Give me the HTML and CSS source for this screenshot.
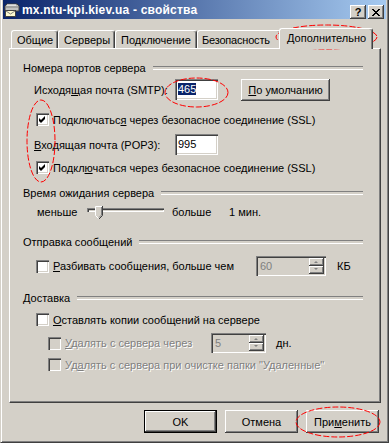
FILE: index.html
```html
<!DOCTYPE html>
<html lang="ru">
<head>
    <meta charset="UTF-8">
    <meta name="viewport" content="width=device-width, initial-scale=1.0">
    <title>mx.ntu-kpi.kiev.ua - свойства</title>
    <link rel="stylesheet" href="styles.css">
</head>
<body>
<div class="window">
    <div class="titlebar">
        <svg class="app-icon" width="16" height="16" viewBox="0 0 16 16">
            <path d="M3 2 H13 L15 4 V9 H1 V4 Z" fill="#c0c0c0" stroke="#404040"/>
            <path d="M3 3 H12" stroke="#fff"/>
            <path d="M2 5 H14" stroke="#808080"/>
            <rect x="1.5" y="8.5" width="10" height="6" fill="#fffbd0" stroke="#404040"/>
            <path d="M2 9 L6.5 12 L11 9" fill="none" stroke="#808080"/>
        </svg>
        <span class="title">mx.ntu-kpi.kiev.ua - свойства</span>
        <span class="caption-btns">
            <span class="cap-btn help">?</span>
            <span class="cap-btn">
                <svg width="8" height="7" viewBox="0 0 8 7"><path d="M0 0 L7 7 M1 0 L8 7 M7 0 L0 7 M8 0 L1 7" stroke="#000" stroke-width="1"/></svg>
            </span>
        </span>
    </div>

    <div class="tabs">
        <div class="tab tab-general">Общие</div>
        <div class="tab tab-servers">Серверы</div>
        <div class="tab tab-connect">Подключение</div>
        <div class="tab tab-security">Безопасность</div>
        <div class="tab tab-advanced active">Дополнительно</div>
    </div>

    <div class="panel">
        <div class="group-title">Номера портов сервера</div>
        <div class="port-row mt5">
            <span class="port-label">Исходя<u>щ</u>ая почта (SMTP):</span>
            <span class="edit"><span class="sel">465</span></span>
            <button class="btn btn-port"><u>П</u>о умолчанию</button>
        </div>
        <div class="check-row mt13">
            <span class="check"><svg width="7" height="7" viewBox="0 0 7 7"><path d="M0 2 L2 4 L6 0 V3 L2 7 L0 5 Z"/></svg></span>
            <span>Подключатьс<u>я</u> через безопасное соединение (SSL)</span>
        </div>
        <div class="port-row mt8">
            <span class="port-label"><u>В</u>ходящая почта (POP3):</span>
            <span class="edit">995</span>
        </div>
        <div class="check-row mt6">
            <span class="check"><svg width="7" height="7" viewBox="0 0 7 7"><path d="M0 2 L2 4 L6 0 V3 L2 7 L0 5 Z"/></svg></span>
            <span>Подкл<u>ю</u>чаться через безопасное соединение (SSL)</span>
        </div>

        <div class="group-title mt13">Время ожидания сервера</div>
        <div class="slider-row mt3">
            <span class="slider-less">меньше</span>
            <span class="track">
                <svg class="thumb" width="8" height="13" viewBox="0 0 8 13">
                    <path d="M0 0 H8 V9 L4 13 L0 9 Z" fill="#d4d0c8"/>
                    <path d="M0.5 9.5 V0.5 H7" fill="none" stroke="#fff"/>
                    <path d="M7.5 0 V9.5 L4 13" fill="none" stroke="#404040"/>
                    <path d="M6.5 1 V9 L4 11.5" fill="none" stroke="#808080"/>
                    <path d="M0.5 9.5 L3.5 12.5" fill="none" stroke="#fff"/>
                </svg>
            </span>
            <span class="slider-more">больше</span>
            <span>1 мин.</span>
        </div>

        <div class="group-title mt14">Отправка сообщений</div>
        <div class="check-row tall mt8">
            <span class="check"></span>
            <span class="split-label"><u>Р</u>азбивать сообщения, больше чем</span>
            <span class="spin spin-kb">
                <span class="spin-val">60</span>
                <span class="spin-btns"><span class="spin-btn up"></span><span class="spin-btn down"></span></span>
            </span>
            <span class="unit">КБ</span>
        </div>

        <div class="group-title mt16">Доставка</div>
        <div class="check-row mt9">
            <span class="check"></span>
            <span><u>О</u>ставлять копии сообщений на сервере</span>
        </div>
        <div class="check-row tall sub disabled mt7">
            <span class="check"></span>
            <span class="days-label"><u>У</u>далять с сервера через</span>
            <span class="spin spin-days">
                <span class="spin-val">5</span>
                <span class="spin-btns"><span class="spin-btn up"></span><span class="spin-btn down"></span></span>
            </span>
            <span class="unit">дн.</span>
        </div>
        <div class="check-row sub disabled mt5">
            <span class="check"></span>
            <span>Уд<u>а</u>лять с сервера при очистке папки "Удаленные"</span>
        </div>
    </div>

    <div class="actions">
        <button class="btn default">OK</button>
        <button class="btn">Отмена</button>
        <button class="btn">При<u>м</u>енить</button>
    </div>

    <!-- пометки красным поверх скриншота -->
    <svg class="marks" width="389" height="443" viewBox="0 0 389 443">
        <g fill="none" stroke="#f00" stroke-dasharray="6 2">
            <ellipse cx="326.5" cy="37" rx="50.5" ry="12"/>
            <ellipse cx="196.5" cy="92.5" rx="31.5" ry="14.5"/>
            <ellipse cx="41" cy="141" rx="14" ry="41"/>
            <ellipse cx="338" cy="422" rx="42" ry="15"/>
        </g>
    </svg>
</div>
</body>
</html>
```

FILE: styles.css
```css
* {
    box-sizing: border-box;
}
body {
    margin: 0;
    background: #d4d0c8;
    font: 11px "Liberation Sans", Arial, sans-serif;
    color: #000;
}
u {
    text-decoration: underline;
    text-underline-offset: 1px;
}
.window {
    position: relative;
    width: 389px;
    height: 443px;
    background: #d4d0c8;
    border-left: 1px solid #d4d0c8;
    border-right: 1px solid #404040;
    border-bottom: 1px solid #404040;
    box-shadow: inset 1px 0 #fff, inset -1px -1px #808080;
    padding: 0 2px 2px;
}

/* заголовок окна */
.titlebar {
    display: flex;
    align-items: center;
    height: 19px;
    padding: 0 2px 0 1px;
    background: linear-gradient(to right, #0a246a, #a6caf0);
}
.app-icon {
    flex: none;
    margin-right: 2px;
}
.title {
    color: #fff;
    font-weight: bold;
    font-size: 12px;
    letter-spacing: 0.2px;
}
.caption-btns {
    display: flex;
    gap: 2px;
    margin-left: auto;
    margin-top: 5px;
}
.cap-btn {
    display: flex;
    align-items: center;
    justify-content: center;
    width: 16px;
    height: 14px;
    background: #d4d0c8;
    box-shadow: inset -1px -1px #404040, inset 1px 1px #fff, inset -2px -2px #808080;
}
.cap-btn.help {
    font-weight: bold;
    font-size: 11px;
    line-height: 14px;
}

/* вкладки */
.tabs {
    display: flex;
    align-items: flex-end;
    height: 20px;
    margin-top: 9px;
    padding-left: 8px;
}
.tab {
    height: 18px;
    padding-left: 5px;
    line-height: 18px;
    border: 1px solid;
    border-color: #fff #404040 transparent #fff;
    border-bottom: none;
    border-radius: 3px 3px 0 0;
    box-shadow: inset -1px 0 #808080;
    white-space: nowrap;
    overflow: hidden;
}
.tab-general { width: 47px; }
.tab-servers { width: 57px; }
.tab-connect { width: 82px; }
.tab-security {
    width: 84px;
    padding-left: 4px;
    letter-spacing: -0.2px;
}
.tab-advanced { width: 90px; }
.tab.active {
    position: relative;
    z-index: 1;
    width: 94px;
    height: 21px;
    padding-left: 7px;
    line-height: 18px;
    margin: 0 -2px -1px;
    background: #d4d0c8;
}
.panel {
    display: flex;
    flex-direction: column;
    width: 372px;
    height: 355px;
    margin-left: 6px;
    padding: 13px 17px 0 13px;
    border: 1px solid;
    border-color: #fff #404040 #404040 #fff;
    box-shadow: inset -1px -1px #808080;
}

/* группы */
.group-title {
    display: flex;
    align-items: center;
    height: 12px;
    line-height: 12px;
}
.group-title::after {
    content: "";
    flex: 1;
    height: 2px;
    margin-left: 7px;
    border-top: 1px solid #808080;
    border-bottom: 1px solid #fff;
}
.mt3 { margin-top: 3px; }
.mt5 { margin-top: 5px; }
.mt6 { margin-top: 6px; }
.mt7 { margin-top: 7px; }
.mt8 { margin-top: 8px; }
.mt9 { margin-top: 9px; }
.mt13 { margin-top: 13px; }
.mt14 { margin-top: 14px; }
.mt16 { margin-top: 16px; }

.port-row {
    display: flex;
    align-items: center;
    height: 21px;
    padding-left: 11px;
}
.port-label {
    width: 141px;
}
.edit {
    width: 43px;
    height: 21px;
    padding: 3px;
    line-height: 15px;
    background: #fff;
    box-shadow: inset 1px 1px #808080, inset 2px 2px #404040, inset -1px -1px #fff, inset -2px -2px #d4d0c8;
}
.sel {
    background: #0a246a;
    color: #fff;
}
.btn {
    width: 73px;
    height: 23px;
    padding: 0;
    border: none;
    background: #d4d0c8;
    font: inherit;
    color: #000;
    box-shadow: inset -1px -1px #404040, inset 1px 1px #fff, inset -2px -2px #808080;
}
.btn.default {
    border: 1px solid #000;
}
.btn-port {
    width: 89px;
    height: 22px;
    margin-left: 23px;
}

/* флажки */
.check-row {
    display: flex;
    align-items: center;
    height: 13px;
    padding-left: 13px;
    white-space: nowrap;
}
.check-row.tall {
    height: 20px;
}
.check-row.sub {
    padding-left: 25px;
}
.check {
    display: flex;
    align-items: center;
    justify-content: center;
    flex: none;
    width: 13px;
    height: 13px;
    margin-right: 4px;
    background: #fff;
    box-shadow: inset 1px 1px #808080, inset 2px 2px #404040, inset -1px -1px #fff, inset -2px -2px #d4d0c8;
}
.disabled {
    color: #808080;
    text-shadow: 1px 1px #fff;
}
.disabled .check {
    background: #d4d0c8;
}

/* ползунок */
.slider-row {
    display: flex;
    align-items: center;
    height: 20px;
    padding-left: 14px;
}
.slider-less {
    width: 50px;
}
.track {
    position: relative;
    width: 77px;
    height: 4px;
    margin: 0 8px 4px 0;
    box-shadow: inset 1px 1px #808080, inset 2px 2px #404040, inset -1px -1px #fff;
}
.thumb {
    position: absolute;
    left: 8px;
    top: -2px;
}
.slider-more {
    width: 57px;
}

/* счётчики */
.split-label {
    width: 203px;
}
.days-label {
    width: 146px;
}
.spin {
    display: flex;
    height: 20px;
    padding: 2px;
    background: #d4d0c8;
    box-shadow: inset 1px 1px #808080, inset 2px 2px #404040, inset -1px -1px #fff, inset -2px -2px #d4d0c8;
    color: #808080;
    text-shadow: none;
}
.spin-kb {
    width: 70px;
}
.spin-days {
    width: 55px;
}
.spin-val {
    flex: 1;
    padding-left: 2px;
    line-height: 16px;
}
.spin-btns {
    display: flex;
    flex-direction: column;
    width: 15px;
}
.spin-btn {
    position: relative;
    flex: 1;
    box-shadow: inset -1px -1px #404040, inset 1px 1px #fff, inset -2px -2px #808080;
}
.spin-btn::after {
    content: "";
    position: absolute;
    left: 5px;
    top: 3px;
    border-left: 2px solid transparent;
    border-right: 2px solid transparent;
}
.spin-btn.up::after {
    border-bottom: 2px solid #808080;
}
.spin-btn.down::after {
    top: 2px;
    border-top: 2px solid #808080;
}
.unit {
    margin-left: 11px;
}
.disabled .unit {
    margin-left: 10px;
    color: #000;
    text-shadow: none;
}

/* кнопки диалога */
.actions {
    display: flex;
    justify-content: flex-end;
    gap: 8px;
    margin-top: 7px;
    padding-right: 7px;
}

.marks {
    position: absolute;
    top: 0;
    left: -1px;
    pointer-events: none;
}
```
